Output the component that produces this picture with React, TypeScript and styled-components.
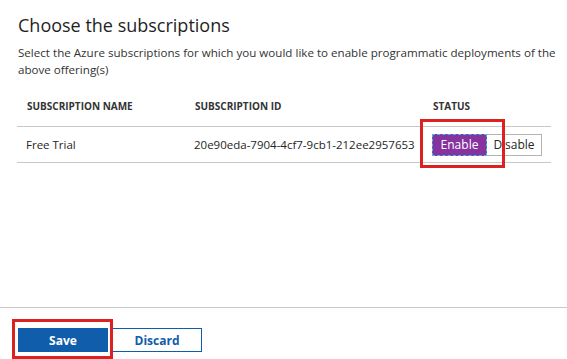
import styled, { createGlobalStyle } from "styled-components";

const GlobalStyle = createGlobalStyle`
  html, body {
    margin: 0;
    padding: 0;
    background: #ffffff;
  }
  body {
    font-family: "Open Sans", "Noto Sans", "Liberation Sans", sans-serif;
    color: #262626;
  }
`;

const Page = styled.div`
  width: 567px;
  height: 359px;
  display: flex;
  flex-direction: column;
  overflow: hidden;
`;

const Content = styled.section`
  flex: 1;
  padding: 13px 6px 0 17px;
`;

const Title = styled.h2`
  margin: 0 0 0 1px;
  font-size: 18px;
  line-height: 24px;
  font-weight: 400;
  color: #1f1f1f;
`;

const Description = styled.p`
  margin: 7px 0 0 1px;
  font-size: 11.6px;
  line-height: 17px;
  color: #333333;
`;

const Table = styled.table`
  width: 534px;
  margin-top: 9px;
  border-collapse: collapse;
  table-layout: fixed;
`;

const HeadCell = styled.th<{ $width: number }>`
  box-sizing: border-box;
  width: ${(p) => p.$width}px;
  padding: 12px 10px 13px 10px;
  text-align: left;
  font-size: 10px;
  line-height: 14px;
  font-weight: 700;
  color: #333333;
  border-bottom: 1px solid #c8c8c8;
`;

const Row = styled.tr`
  border-bottom: 1px solid #c8c8c8;
`;

const Cell = styled.td`
  box-sizing: border-box;
  height: 35px;
  padding: 7px 4px 6px 9px;
  font-size: 11.5px;
  line-height: 16px;
  color: #262626;
  vertical-align: middle;
  white-space: nowrap;
`;

const Highlight = styled.span<{ $inset: string }>`
  position: relative;
  display: inline-flex;
  flex-shrink: 0;
  &::after {
    content: "";
    position: absolute;
    inset: ${(p) => p.$inset};
    border: 3px solid #dd2020;
    pointer-events: none;
  }
`;

const Toggle = styled.div`
  display: flex;
`;

const ToggleButton = styled.button<{ $active?: boolean }>`
  flex-shrink: 0;
  width: 55px;
  height: 22px;
  padding: 0;
  font-family: inherit;
  font-size: 12px;
  line-height: 20px;
  color: ${(p) => (p.$active ? "#ffffff" : "#262626")};
  background: ${(p) => (p.$active ? "#86339f" : "#ffffff")};
  border: 1px ${(p) => (p.$active ? "dashed #3fc3e6" : "solid #b4b4b4")};
  ${(p) => !p.$active && "border-left: none;"}
`;

const Footer = styled.footer`
  border-top: 1px solid #c8c8c8;
  padding: 20px 18px 0;
  height: 52px;
  box-sizing: border-box;
  display: flex;
  align-items: flex-start;
  gap: 4px;
`;

const ActionButton = styled.button<{ $primary?: boolean }>`
  width: 90px;
  height: 24px;
  padding: 0;
  font-family: inherit;
  font-size: 12px;
  font-weight: 700;
  color: ${(p) => (p.$primary ? "#ffffff" : "#105dab")};
  background: ${(p) => (p.$primary ? "#105dab" : "#ffffff")};
  border: 1px solid #105dab;
`;

const App = () => {
  return (
    <>
      <GlobalStyle />
      <Page>
        <Content>
          <Title>Choose the subscriptions</Title>
          <Description>
            Select the Azure subscriptions for which you would like to enable
            programmatic deployments of the above offering(s)
          </Description>
          <Table>
            <thead>
              <tr>
                <HeadCell $width={168}>SUBSCRIPTION NAME</HeadCell>
                <HeadCell $width={238}>SUBSCRIPTION ID</HeadCell>
                <HeadCell $width={128}>STATUS</HeadCell>
              </tr>
            </thead>
            <tbody>
              <Row>
                <Cell>Free Trial</Cell>
                <Cell>20e90eda-7904-4cf7-9cb1-212ee2957653</Cell>
                <Cell>
                  <Toggle>
                    <Highlight $inset="-15px -18px -12px -12px">
                      <ToggleButton $active>Enable</ToggleButton>
                    </Highlight>
                    <ToggleButton>Disable</ToggleButton>
                  </Toggle>
                </Cell>
              </Row>
            </tbody>
          </Table>
        </Content>
        <Footer>
          <Highlight $inset="-9px -5px -7px -6px">
            <ActionButton $primary>Save</ActionButton>
          </Highlight>
          <ActionButton>Discard</ActionButton>
        </Footer>
      </Page>
    </>
  );
};

export default App;
